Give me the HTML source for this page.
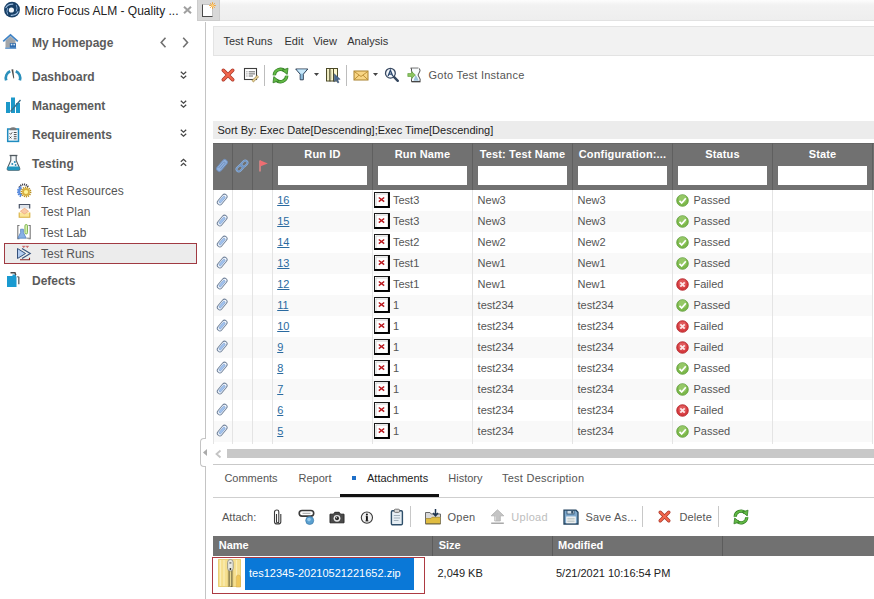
<!DOCTYPE html>
<html><head><meta charset="utf-8">
<style>
*{box-sizing:border-box;margin:0;padding:0}
html,body{width:874px;height:599px;overflow:hidden;background:#fff;font-family:"Liberation Sans",sans-serif;position:relative}
.a{position:absolute}
.t{position:absolute;white-space:nowrap;line-height:1}
svg{overflow:visible}
</style></head><body>
<div class="a" style="left:220px;top:0px;width:654px;height:21px;background:linear-gradient(#fdfdfd 0px,#f2f2f2 5px,#eeeeee 20px);border-bottom:1px solid #e2e2e2"></div>
<svg class="a" style="left:3px;top:1px" width="18" height="18" viewBox="0 0 18 18">
  <circle cx="9" cy="8.7" r="7.9" fill="#183f66"/>
  <circle cx="8.4" cy="9" r="2.6" fill="#f2f6fa"/>
  <g fill="none" stroke-linecap="round">
    <path d="M3 6.6 Q4.8 3 9.8 3.1" stroke="#9dbddf" stroke-width="1.2"/>
    <path d="M15 10.8 Q13.2 14.4 8.2 14.3" stroke="#9dbddf" stroke-width="1.2"/>
    <path d="M4.6 13.2 Q3 10.4 4.6 7.4" stroke="#7ea6d0" stroke-width="1"/>
    <path d="M13.4 4.2 Q15 7 13.4 10" stroke="#7ea6d0" stroke-width="1"/>
  </g>
</svg>
<div class="t" style="left:24.5px;top:5px;font-size:12px;color:#222;font-weight:400;">Micro Focus ALM - Quality ...</div>
<svg class="a" style="left:183px;top:6px" width="9" height="8" viewBox="0 0 9 8"><path d="M1 0.7L8 7.3M8 0.7L1 7.3" stroke="#a0a0a0" stroke-width="2"/></svg>
<div class="a" style="left:197px;top:0px;width:23px;height:21px;background:#d8d8d8;border:1px solid #cdcdcd;border-top:none"></div>
<div class="a" style="left:202px;top:4px;width:11px;height:13px;background:#fff;border:1px solid #c4c4c4;border-left:1px solid #4a4a4a;border-bottom:1px solid #4a4a4a"></div>
<svg class="a" style="left:209px;top:2px" width="7" height="7" viewBox="0 0 7 7"><g stroke="#f3a43a" stroke-width="1"><path d="M3.5 0.2V6.8M0.2 3.5H6.8M1.2 1.2L5.8 5.8M5.8 1.2L1.2 5.8"/></g><circle cx="3.5" cy="3.5" r="1.5" fill="#fbd080"/></svg>
<div class="a" style="left:205px;top:22px;width:1px;height:416px;background:#c4c4c4"></div>
<div class="a" style="left:205px;top:466px;width:1px;height:133px;background:#c4c4c4"></div>
<div class="t" style="left:32px;top:37px;font-size:12px;color:#5b5b5b;font-weight:700;">My Homepage</div>
<div class="t" style="left:32px;top:71px;font-size:12px;color:#5b5b5b;font-weight:700;">Dashboard</div>
<div class="t" style="left:32px;top:100px;font-size:12px;color:#5b5b5b;font-weight:700;">Management</div>
<div class="t" style="left:32px;top:129px;font-size:12px;color:#5b5b5b;font-weight:700;">Requirements</div>
<div class="t" style="left:32px;top:158px;font-size:12px;color:#5b5b5b;font-weight:700;">Testing</div>
<div class="t" style="left:32px;top:275px;font-size:12px;color:#5b5b5b;font-weight:700;">Defects</div>
<svg class="a" style="left:160px;top:37px" width="7" height="11" viewBox="0 0 7 11"><path d="M5.5 0.8L1.2 5.5L5.5 10.2" stroke="#707070" stroke-width="1.6" fill="none"/></svg>
<svg class="a" style="left:181.5px;top:37px" width="7" height="11" viewBox="0 0 7 11"><path d="M1.2 0.8L5.5 5.5L1.2 10.2" stroke="#707070" stroke-width="1.6" fill="none"/></svg>
<svg class="a" style="left:180px;top:71px" width="7" height="9" viewBox="0 0 7 9"><path d="M0.8 0.8L3.5 3.3L6.2 0.8M0.8 4.8L3.5 7.3L6.2 4.8" stroke="#444" stroke-width="1.2" fill="none"/></svg>
<svg class="a" style="left:180px;top:100px" width="7" height="9" viewBox="0 0 7 9"><path d="M0.8 0.8L3.5 3.3L6.2 0.8M0.8 4.8L3.5 7.3L6.2 4.8" stroke="#444" stroke-width="1.2" fill="none"/></svg>
<svg class="a" style="left:180px;top:129px" width="7" height="9" viewBox="0 0 7 9"><path d="M0.8 0.8L3.5 3.3L6.2 0.8M0.8 4.8L3.5 7.3L6.2 4.8" stroke="#444" stroke-width="1.2" fill="none"/></svg>
<svg class="a" style="left:180px;top:158px" width="7" height="9" viewBox="0 0 7 9"><path d="M0.8 3.8L3.5 1.3L6.2 3.8M0.8 7.8L3.5 5.3L6.2 7.8" stroke="#444" stroke-width="1.2" fill="none"/></svg>
<svg class="a" style="left:2px;top:33px" width="17" height="16" viewBox="0 0 17 16">
  <path d="M3.5 7.8V14.8H13.5V7.8L8.5 3.2z" fill="#a2a6aa"/>
  <path d="M1.2 8.3L8.5 1.8L15.8 8.3" stroke="#3f82c4" stroke-width="1.7" fill="none"/>
  <rect x="7.8" y="10.2" width="6.2" height="4.6" fill="#2f6db0"/>
  <circle cx="9.6" cy="11.6" r="0.9" fill="#d8e6f2"/><circle cx="12.2" cy="11.6" r="0.9" fill="#d8e6f2"/>
  <rect x="3.2" y="14.6" width="11" height="1.2" fill="#4a88c8"/>
</svg>
<svg class="a" style="left:4px;top:68px" width="18" height="13" viewBox="0 0 18 13">
  <path d="M2.2 12.3 A7.6 7.6 0 0 1 6.2 3.2" stroke="#2a8fbb" stroke-width="2.8" fill="none"/>
  <path d="M11.8 3.2 A7.6 7.6 0 0 1 15.8 12.3" stroke="#2a8fbb" stroke-width="2.8" fill="none"/>
  <path d="M7.4 1.5 L9.2 1.3 L10.2 10.2 L9.4 10.4z" fill="#4a4a4a"/>
</svg>
<svg class="a" style="left:5px;top:97px" width="17" height="16" viewBox="0 0 17 16">
  <rect x="1" y="5" width="4" height="11" fill="#1c98c9"/>
  <rect x="6" y="0.5" width="4" height="15.5" fill="#1c98c9"/>
  <rect x="11" y="6" width="4" height="10" fill="#1c98c9"/>
  <path d="M5.5 14.5L15.5 3" stroke="#3b6f8a" stroke-width="1.4"/>
</svg>
<svg class="a" style="left:6px;top:126px" width="14" height="17" viewBox="0 0 14 17">
  <rect x="1.7" y="3" width="10.8" height="12.4" fill="#f2f7fa" stroke="#1f8cc0" stroke-width="1.5"/>
  <path d="M3.5 4.2Q3.5 1.2 7.1 1.2Q10.7 1.2 10.7 4.2z" fill="#7a7a7a"/>
  <path d="M3.6 7.3l1 1 1.6-1.9M3.6 10.6l1.8 1.8M5.4 10.6l-1.8 1.8" stroke="#3a3a3a" stroke-width="0.9" fill="none"/>
  <path d="M7.8 6.5h2.8M7.8 8.6h2.8M7.8 10.7h2.8M7.8 12.8h2.8" stroke="#3a3a3a" stroke-width="0.9"/>
</svg>
<svg class="a" style="left:6px;top:154px" width="15" height="18" viewBox="0 0 15 18">
  <path d="M4.8 1.8V6.5L1.3 14.3Q0.9 16.3 2.6 16.3H12.4Q14.1 16.3 13.7 14.3L10.2 6.5V1.8" stroke="#505a60" stroke-width="1.1" fill="#f4f8fa"/>
  <path d="M3.6 1.5H11.4" stroke="#505a60" stroke-width="1.3"/>
  <path d="M1.8 12.6H13.2L13.7 14.3Q14.1 16.3 12.4 16.3H2.6Q0.9 16.3 1.3 14.3z" fill="#2296bf"/>
  <circle cx="6.3" cy="10" r="1" fill="#2a8ab5"/><circle cx="8.8" cy="8" r="1" fill="#2a8ab5"/><circle cx="9.6" cy="11" r="0.9" fill="#2a8ab5"/>
</svg>
<svg class="a" style="left:16px;top:182px" width="16" height="16" viewBox="0 0 16 16">
  <path d="M3.5 5.5 A4.6 4.6 0 0 1 12 5" stroke="#3c3c48" stroke-width="2" fill="none" stroke-dasharray="1.1 0.8"/>
  <path d="M5.3 13.8 A4.8 4.8 0 0 1 5.3 5.2" stroke="#4a80d8" stroke-width="3.2" fill="none" stroke-dasharray="1.3 0.7"/>
  <path d="M5.3 13.2 A4.2 4.2 0 0 1 5.3 5.8" stroke="#5b8ee0" stroke-width="2.2" fill="none"/>
  <circle cx="10" cy="10" r="4.6" fill="none" stroke="#b89020" stroke-width="1.6" stroke-dasharray="1.2 0.8"/>
  <circle cx="10" cy="10" r="3.9" fill="#d8b040"/>
  <circle cx="10" cy="10" r="2.1" fill="#fff59a"/>
</svg>
<svg class="a" style="left:18px;top:203px" width="13" height="16" viewBox="0 0 13 16">
  <path d="M1.3 5.5V1.5H11.7V5.5" stroke="#4a5568" stroke-width="1.2" fill="#dfe4ea"/>
  <path d="M1.2 9.5V14.2H11.8V9.5" stroke="#d8b040" stroke-width="1.1" fill="#fbe69a"/>
  <path d="M1.8 8.2L6.5 4.8L11.2 8.2L6.5 11.4z" fill="#f0b48a"/>
  <path d="M3 8.2L6.5 5.8L10 8.2L6.5 10.4z" fill="#f8caa8"/>
</svg>
<svg class="a" style="left:17px;top:224px" width="14" height="16" viewBox="0 0 14 16">
  <path d="M2.5 1.5H0.8V14.6H2.5M11.5 1.5H13.2V14.6H11.5" stroke="#7a7a7a" stroke-width="1.1" fill="none"/>
  <path d="M3.6 5.2H6.4V8.5L9.2 14.2H0.8L3.6 8.5z" fill="#88b2e6" stroke="#4a78b8" stroke-width="0.7"/>
  <rect x="7.9" y="0.5" width="2.6" height="9.5" rx="1.3" fill="#d8f0b0" stroke="#6aa838" stroke-width="0.8"/>
  <path d="M9.5 14.2H12.8" stroke="#9a9a9a" stroke-width="1.2"/>
</svg>
<div class="a" style="left:4px;top:243px;width:193px;height:21px;background:#ececec;border:1px solid #a03a42"></div>
<div class="t" style="left:41px;top:185px;font-size:12px;color:#555;font-weight:400;">Test Resources</div>
<div class="t" style="left:41px;top:206px;font-size:12px;color:#555;font-weight:400;">Test Plan</div>
<div class="t" style="left:41px;top:227px;font-size:12px;color:#555;font-weight:400;">Test Lab</div>
<div class="t" style="left:41px;top:248px;font-size:12px;color:#555;font-weight:400;">Test Runs</div>
<svg class="a" style="left:16px;top:245px" width="16" height="16" viewBox="0 0 16 16">
  <path d="M1.5 3.5L9.5 8.5L1.5 13.5z" fill="#b4cdf0" stroke="#34507a" stroke-width="1"/>
  <path d="M6 3.5L14.3 8.5L6 13.5" stroke="#34507a" stroke-width="1.1" fill="none"/>
  <path d="M6.2 1.3H9.3M7.75 1.3V3M9.8 1.3H12.8M11.3 1.3V3" stroke="#c05050" stroke-width="0.8"/>
  <path d="M4 14.8H13.5V12.8" stroke="#8a2a2a" stroke-width="1.1" fill="none"/>
</svg>
<svg class="a" style="left:6px;top:271px" width="16" height="17" viewBox="0 0 16 17">
  <path d="M1 5H6.5V3.5H9.5L10.5 6V16H1z" fill="#1a9ad0"/>
  <path d="M4.5 1.8H9L9.8 4.2" stroke="#4a4a4a" stroke-width="1.4" fill="none"/>
  <path d="M12.8 5.8V13.2" stroke="#6a6a6a" stroke-width="1.4"/>
  <path d="M11 5.8H12.8" stroke="#6a6a6a" stroke-width="1"/>
</svg>
<div class="a" style="left:213px;top:26px;width:661px;height:30px;background:#f2f2f2;border:1px solid #e3e3e3;border-right:none"></div>
<div class="t" style="left:223.5px;top:36px;font-size:11px;color:#333;font-weight:400;">Test Runs</div>
<div class="t" style="left:284.5px;top:36px;font-size:11px;color:#333;font-weight:400;">Edit</div>
<div class="t" style="left:313.2px;top:36px;font-size:11px;color:#333;font-weight:400;">View</div>
<div class="t" style="left:347.2px;top:36px;font-size:11px;color:#333;font-weight:400;">Analysis</div>
<svg class="a" style="left:221px;top:68px" width="14" height="14" viewBox="0 0 14 14"><path d="M2.3 2.3L11.7 11.7M11.7 2.3L2.3 11.7" stroke="#a8382a" stroke-width="3.6" stroke-linecap="round"/><path d="M2.3 2.3L11.7 11.7M11.7 2.3L2.3 11.7" stroke="#f2664c" stroke-width="2.1" stroke-linecap="round"/></svg>
<svg class="a" style="left:243px;top:67px" width="17" height="16" viewBox="0 0 17 16">
  <rect x="1.5" y="1.5" width="12" height="11" fill="#fff" stroke="#3f3f3f" stroke-width="1.1"/>
  <path d="M3.3 4.8h1.2M3.3 6.9h1.2M3.3 9h1.2" stroke="#888" stroke-width="1"/>
  <path d="M5.7 4.8H12M5.7 6.9H12M5.7 9H10" stroke="#555" stroke-width="0.9"/>
  <path d="M9.5 14.5L15 9" stroke="#a08850" stroke-width="2.6"/>
  <path d="M9.5 14.5L15 9" stroke="#e8d49a" stroke-width="1.4"/>
</svg>
<div class="a" style="left:264px;top:65px;width:1px;height:21px;background:#bdbdbd"></div>
<svg class="a" style="left:272px;top:67px" width="17" height="17" viewBox="0 0 17 17">
  <g fill="none" stroke-linecap="butt">
  <path d="M2.3 8.2A6.2 6.2 0 0 1 12.8 4" stroke="#2f7a22" stroke-width="3.4"/>
  <path d="M14.7 8.8A6.2 6.2 0 0 1 4.2 13" stroke="#2f7a22" stroke-width="3.4"/>
  <path d="M2.3 8.2A6.2 6.2 0 0 1 12.8 4" stroke="#62b845" stroke-width="2"/>
  <path d="M14.7 8.8A6.2 6.2 0 0 1 4.2 13" stroke="#62b845" stroke-width="2"/>
  </g>
  <path d="M10 3.2L16 1.2L15.2 7.4z" fill="#62b845" stroke="#2f7a22" stroke-width="0.8"/>
  <path d="M7 13.8L1 15.8L1.8 9.6z" fill="#62b845" stroke="#2f7a22" stroke-width="0.8"/>
</svg>
<svg class="a" style="left:295px;top:68px" width="14" height="13" viewBox="0 0 14 13"><path d="M0.7 1H12.8L8.3 6.2V11.8H5.2V6.2z" fill="#9fd0ee" stroke="#2f3f55" stroke-width="1"/><path d="M1.8 1.6H11.7L7.8 5.4H5.7z" fill="#c8e8fa"/><path d="M5.8 6.5V11" stroke="#5d88aa" stroke-width="1"/></svg>
<svg class="a" style="left:314px;top:73px" width="5" height="3" viewBox="0 0 5 3"><path d="M0 0H5L2.5 3z" fill="#444"/></svg>
<svg class="a" style="left:325px;top:67px" width="16" height="17" viewBox="0 0 16 17">
  <rect x="1.5" y="1.5" width="3.5" height="12.5" fill="#fdf9cf" stroke="#4c4a28" stroke-width="1"/>
  <rect x="5" y="1.5" width="3.5" height="12.5" fill="#fdf9cf" stroke="#4c4a28" stroke-width="1"/>
  <rect x="8.5" y="1.5" width="4" height="12.5" fill="#fdf9cf" stroke="#4c4a28" stroke-width="1"/>
  <path d="M2.9 3.2V12.5M6.5 3.2V12.5" stroke="#c8c8a0" stroke-width="0.6"/>
  <path d="M9.3 6.8L9.3 14.8L11.3 13L12.8 16L14 15.4L12.6 12.5L15.2 12.3z" fill="#4a6a90" stroke="#3a5070" stroke-width="0.5"/>
</svg>
<div class="a" style="left:346px;top:65px;width:1px;height:21px;background:#bdbdbd"></div>
<svg class="a" style="left:353px;top:70px" width="16" height="11" viewBox="0 0 16 11"><rect x="1" y="1" width="14" height="9" fill="#f8d584" stroke="#a8802c" stroke-width="1"/><path d="M1.3 1.5L8 6.5L14.7 1.5M1.3 9.5L6 5.2M14.7 9.5L10 5.2" stroke="#b88a30" stroke-width="0.9" fill="none"/></svg>
<svg class="a" style="left:373px;top:73px" width="5" height="3" viewBox="0 0 5 3"><path d="M0 0H5L2.5 3z" fill="#444"/></svg>
<svg class="a" style="left:384px;top:67px" width="16" height="16" viewBox="0 0 16 16">
  <circle cx="6.4" cy="6.2" r="4.9" fill="#f4f8fc" stroke="#3a4a62" stroke-width="1.3"/>
  <path d="M9.9 9.8L13.8 13.8" stroke="#34465e" stroke-width="2.4" stroke-linecap="round"/>
  <path d="M4.1 8.9L6.4 3.2L8.7 8.9M4.9 7.1H7.9" stroke="#2e4a70" stroke-width="1.3" fill="none"/>
</svg>
<svg class="a" style="left:407px;top:67px" width="16" height="16" viewBox="0 0 16 16">
  <path d="M3.5 1.2H11.5M4.5 14.8H13.5" stroke="#2a2a2a" stroke-width="1"/>
  <path d="M4.5 1.5Q4 4 5.5 6Q7.5 8 5.5 10Q4 12 4.5 14.5H13Q13.8 12 12 10Q10 8 12 6Q13.8 4 12.5 1.5" fill="#f8fbfd" stroke="#3a3a3a" stroke-width="0.9"/>
  <path d="M8.5 8Q10.5 10 11.8 13.8H6.5Q7.5 11 8.5 8z" fill="#9ec4dc"/>
  <path d="M0.8 6.5H4.5V4.6L8.4 8L4.5 11.4V9.5H0.8z" fill="#8cc460" stroke="#5a9a38" stroke-width="0.6"/>
</svg>
<div class="t" style="left:428.5px;top:70px;font-size:11px;color:#555;font-weight:400;letter-spacing:0.25px">Goto Test Instance</div>
<div class="a" style="left:213px;top:121px;width:661px;height:18px;background:#ececec"></div>
<div class="t" style="left:217.5px;top:125px;font-size:11px;color:#222;font-weight:400;">Sort By: Exec Date[Descending];Exec Time[Descending]</div>
<div class="a" style="left:213px;top:143px;width:661px;height:47px;background:#717171;border-top:1px solid #666"></div>
<div class="a" style="left:232px;top:143px;width:1px;height:47px;background:#5f5f5f"></div>
<div class="a" style="left:252px;top:143px;width:1px;height:47px;background:#5f5f5f"></div>
<div class="a" style="left:272px;top:143px;width:1px;height:47px;background:#5f5f5f"></div>
<div class="a" style="left:372px;top:143px;width:1px;height:47px;background:#5f5f5f"></div>
<div class="a" style="left:472px;top:143px;width:1px;height:47px;background:#5f5f5f"></div>
<div class="a" style="left:572px;top:143px;width:1px;height:47px;background:#5f5f5f"></div>
<div class="a" style="left:672px;top:143px;width:1px;height:47px;background:#5f5f5f"></div>
<div class="a" style="left:772px;top:143px;width:1px;height:47px;background:#5f5f5f"></div>
<div class="a" style="left:872px;top:143px;width:1px;height:47px;background:#5f5f5f"></div>
<div class="t" style="left:272px;width:100px;top:149px;text-align:center;font-size:11px;font-weight:700;color:#fff;letter-spacing:0.15px;padding-left:1px">Run ID</div>
<div class="a" style="left:278px;top:166px;width:89px;height:19px;background:#fff"></div>
<div class="t" style="left:372px;width:100px;top:149px;text-align:center;font-size:11px;font-weight:700;color:#fff;letter-spacing:0.15px;padding-left:1px">Run Name</div>
<div class="a" style="left:378px;top:166px;width:89px;height:19px;background:#fff"></div>
<div class="t" style="left:472px;width:100px;top:149px;text-align:center;font-size:11px;font-weight:700;color:#fff;letter-spacing:0.15px;padding-left:1px">Test: Test Name</div>
<div class="a" style="left:478px;top:166px;width:89px;height:19px;background:#fff"></div>
<div class="t" style="left:572px;width:100px;top:149px;text-align:center;font-size:11px;font-weight:700;color:#fff;letter-spacing:0.15px;padding-left:1px">Configuration:...</div>
<div class="a" style="left:578px;top:166px;width:89px;height:19px;background:#fff"></div>
<div class="t" style="left:672px;width:100px;top:149px;text-align:center;font-size:11px;font-weight:700;color:#fff;letter-spacing:0.15px;padding-left:1px">Status</div>
<div class="a" style="left:678px;top:166px;width:89px;height:19px;background:#fff"></div>
<div class="t" style="left:772px;width:100px;top:149px;text-align:center;font-size:11px;font-weight:700;color:#fff;letter-spacing:0.15px;padding-left:1px">State</div>
<div class="a" style="left:778px;top:166px;width:89px;height:19px;background:#fff"></div>
<svg class="a" style="left:216px;top:159px" width="12" height="13" viewBox="0 0 12 13"><g transform="rotate(40 6 6.5)"><rect x="3.3" y="-0.5" width="5.4" height="14" rx="2.7" fill="#8fb0dc" stroke="#6f8cb8" stroke-width="0.9"/><path d="M5 10.5V3.2Q5 2.2 6 2.2Q7 2.2 7 3.2V10" stroke="#6f8cb8" stroke-width="0.8" fill="none"/></g></svg>
<svg class="a" style="left:235px;top:159px" width="14" height="14" viewBox="0 0 14 14"><g transform="rotate(-45 7 7)" fill="none" stroke="#8fb4e0" stroke-width="1.9"><rect x="0.2" y="4.8" width="7.4" height="4.4" rx="2.2"/><rect x="6.4" y="4.8" width="7.4" height="4.4" rx="2.2"/></g><g transform="rotate(-45 7 7)" fill="none" stroke="#5a7fb0" stroke-width="0.6"><rect x="0.2" y="4.8" width="7.4" height="4.4" rx="2.2"/><rect x="6.4" y="4.8" width="7.4" height="4.4" rx="2.2"/></g></svg>
<svg class="a" style="left:258px;top:159px" width="11" height="13" viewBox="0 0 11 13"><path d="M2 1.5V12.5" stroke="#e08a8a" stroke-width="1.5"/><path d="M2 1.2L9.8 4.4L2 7.6z" fill="#ee6e72"/></svg>
<div class="a" style="left:213px;top:190.00px;width:660px;height:21.00px;background:#ffffff"></div>
<div class="a" style="left:213px;top:211.00px;width:660px;height:21.00px;background:#f9f9f9"></div>
<div class="a" style="left:213px;top:232.00px;width:660px;height:21.00px;background:#ffffff"></div>
<div class="a" style="left:213px;top:253.00px;width:660px;height:21.00px;background:#f9f9f9"></div>
<div class="a" style="left:213px;top:274.00px;width:660px;height:21.00px;background:#ffffff"></div>
<div class="a" style="left:213px;top:295.00px;width:660px;height:21.00px;background:#f9f9f9"></div>
<div class="a" style="left:213px;top:316.00px;width:660px;height:21.00px;background:#ffffff"></div>
<div class="a" style="left:213px;top:337.00px;width:660px;height:21.00px;background:#f9f9f9"></div>
<div class="a" style="left:213px;top:358.00px;width:660px;height:21.00px;background:#ffffff"></div>
<div class="a" style="left:213px;top:379.00px;width:660px;height:21.00px;background:#f9f9f9"></div>
<div class="a" style="left:213px;top:400.00px;width:660px;height:21.00px;background:#ffffff"></div>
<div class="a" style="left:213px;top:421.00px;width:660px;height:21.00px;background:#f9f9f9"></div>
<div class="a" style="left:213px;top:190px;width:1px;height:254.00px;background:#e4e4e4"></div>
<div class="a" style="left:232px;top:190px;width:1px;height:254.00px;background:#e4e4e4"></div>
<div class="a" style="left:252px;top:190px;width:1px;height:254.00px;background:#e4e4e4"></div>
<div class="a" style="left:272px;top:190px;width:1px;height:254.00px;background:#e4e4e4"></div>
<div class="a" style="left:372px;top:190px;width:1px;height:254.00px;background:#e4e4e4"></div>
<div class="a" style="left:472px;top:190px;width:1px;height:254.00px;background:#e4e4e4"></div>
<div class="a" style="left:572px;top:190px;width:1px;height:254.00px;background:#e4e4e4"></div>
<div class="a" style="left:672px;top:190px;width:1px;height:254.00px;background:#e4e4e4"></div>
<div class="a" style="left:772px;top:190px;width:1px;height:254.00px;background:#e4e4e4"></div>
<div class="a" style="left:872px;top:190px;width:1px;height:254.00px;background:#e4e4e4"></div>
<svg class="a" style="left:216px;top:193px" width="12" height="13" viewBox="0 0 12 13"><g transform="rotate(40 6.2 6.5)"><rect x="3.7" y="0.3" width="5" height="12.4" rx="2.5" fill="#eef5fd" stroke="#71829a" stroke-width="0.95"/><rect x="5.1" y="2.6" width="2.2" height="8" rx="1.1" fill="#a2c4f0" stroke="#7d9ccc" stroke-width="0.6"/></g></svg>
<div class="t" style="left:277.2px;top:195px;font-size:11px;color:#2a6aa0;font-weight:400;text-decoration:underline">16</div>
<svg class="a" style="left:374px;top:192px" width="16" height="16" viewBox="0 0 16 16"><rect x="0.5" y="0.5" width="15" height="15" fill="#fff" stroke="#1a1a1a" stroke-width="1"/><path d="M14.8 0.5V14.8H0.5" stroke="#000" stroke-width="1.8" fill="none"/><path d="M2 14V2H14" stroke="#c8c8c8" stroke-width="0.8" fill="none"/><path d="M4.8 5.5L10.2 9.6M10.2 5.5L4.8 9.6" stroke="#b8161c" stroke-width="1.5"/></svg>
<div class="t" style="left:393px;top:195px;font-size:11px;color:#555;font-weight:400;">Test3</div>
<div class="t" style="left:477.6px;top:195px;font-size:11px;color:#555;font-weight:400;">New3</div>
<div class="t" style="left:577.5px;top:195px;font-size:11px;color:#555;font-weight:400;">New3</div>
<svg class="a" style="left:676px;top:194px" width="13" height="13" viewBox="0 0 13 13"><circle cx="6.5" cy="6.5" r="5.8" fill="#7cb84a" stroke="#5a9a35" stroke-width="0.8"/><circle cx="6.5" cy="5" r="4" fill="#a6d27a" opacity="0.6"/><path d="M3.5 6.8L5.7 9L9.8 4.2" stroke="#fff" stroke-width="1.7" fill="none"/></svg>
<div class="t" style="left:693.5px;top:195px;font-size:11px;color:#555;font-weight:400;">Passed</div>
<svg class="a" style="left:216px;top:214px" width="12" height="13" viewBox="0 0 12 13"><g transform="rotate(40 6.2 6.5)"><rect x="3.7" y="0.3" width="5" height="12.4" rx="2.5" fill="#eef5fd" stroke="#71829a" stroke-width="0.95"/><rect x="5.1" y="2.6" width="2.2" height="8" rx="1.1" fill="#a2c4f0" stroke="#7d9ccc" stroke-width="0.6"/></g></svg>
<div class="t" style="left:277.2px;top:216px;font-size:11px;color:#2a6aa0;font-weight:400;text-decoration:underline">15</div>
<svg class="a" style="left:374px;top:213px" width="16" height="16" viewBox="0 0 16 16"><rect x="0.5" y="0.5" width="15" height="15" fill="#fff" stroke="#1a1a1a" stroke-width="1"/><path d="M14.8 0.5V14.8H0.5" stroke="#000" stroke-width="1.8" fill="none"/><path d="M2 14V2H14" stroke="#c8c8c8" stroke-width="0.8" fill="none"/><path d="M4.8 5.5L10.2 9.6M10.2 5.5L4.8 9.6" stroke="#b8161c" stroke-width="1.5"/></svg>
<div class="t" style="left:393px;top:216px;font-size:11px;color:#555;font-weight:400;">Test3</div>
<div class="t" style="left:477.6px;top:216px;font-size:11px;color:#555;font-weight:400;">New3</div>
<div class="t" style="left:577.5px;top:216px;font-size:11px;color:#555;font-weight:400;">New3</div>
<svg class="a" style="left:676px;top:215px" width="13" height="13" viewBox="0 0 13 13"><circle cx="6.5" cy="6.5" r="5.8" fill="#7cb84a" stroke="#5a9a35" stroke-width="0.8"/><circle cx="6.5" cy="5" r="4" fill="#a6d27a" opacity="0.6"/><path d="M3.5 6.8L5.7 9L9.8 4.2" stroke="#fff" stroke-width="1.7" fill="none"/></svg>
<div class="t" style="left:693.5px;top:216px;font-size:11px;color:#555;font-weight:400;">Passed</div>
<svg class="a" style="left:216px;top:235px" width="12" height="13" viewBox="0 0 12 13"><g transform="rotate(40 6.2 6.5)"><rect x="3.7" y="0.3" width="5" height="12.4" rx="2.5" fill="#eef5fd" stroke="#71829a" stroke-width="0.95"/><rect x="5.1" y="2.6" width="2.2" height="8" rx="1.1" fill="#a2c4f0" stroke="#7d9ccc" stroke-width="0.6"/></g></svg>
<div class="t" style="left:277.2px;top:237px;font-size:11px;color:#2a6aa0;font-weight:400;text-decoration:underline">14</div>
<svg class="a" style="left:374px;top:234px" width="16" height="16" viewBox="0 0 16 16"><rect x="0.5" y="0.5" width="15" height="15" fill="#fff" stroke="#1a1a1a" stroke-width="1"/><path d="M14.8 0.5V14.8H0.5" stroke="#000" stroke-width="1.8" fill="none"/><path d="M2 14V2H14" stroke="#c8c8c8" stroke-width="0.8" fill="none"/><path d="M4.8 5.5L10.2 9.6M10.2 5.5L4.8 9.6" stroke="#b8161c" stroke-width="1.5"/></svg>
<div class="t" style="left:393px;top:237px;font-size:11px;color:#555;font-weight:400;">Test2</div>
<div class="t" style="left:477.6px;top:237px;font-size:11px;color:#555;font-weight:400;">New2</div>
<div class="t" style="left:577.5px;top:237px;font-size:11px;color:#555;font-weight:400;">New2</div>
<svg class="a" style="left:676px;top:236px" width="13" height="13" viewBox="0 0 13 13"><circle cx="6.5" cy="6.5" r="5.8" fill="#7cb84a" stroke="#5a9a35" stroke-width="0.8"/><circle cx="6.5" cy="5" r="4" fill="#a6d27a" opacity="0.6"/><path d="M3.5 6.8L5.7 9L9.8 4.2" stroke="#fff" stroke-width="1.7" fill="none"/></svg>
<div class="t" style="left:693.5px;top:237px;font-size:11px;color:#555;font-weight:400;">Passed</div>
<svg class="a" style="left:216px;top:256px" width="12" height="13" viewBox="0 0 12 13"><g transform="rotate(40 6.2 6.5)"><rect x="3.7" y="0.3" width="5" height="12.4" rx="2.5" fill="#eef5fd" stroke="#71829a" stroke-width="0.95"/><rect x="5.1" y="2.6" width="2.2" height="8" rx="1.1" fill="#a2c4f0" stroke="#7d9ccc" stroke-width="0.6"/></g></svg>
<div class="t" style="left:277.2px;top:258px;font-size:11px;color:#2a6aa0;font-weight:400;text-decoration:underline">13</div>
<svg class="a" style="left:374px;top:255px" width="16" height="16" viewBox="0 0 16 16"><rect x="0.5" y="0.5" width="15" height="15" fill="#fff" stroke="#1a1a1a" stroke-width="1"/><path d="M14.8 0.5V14.8H0.5" stroke="#000" stroke-width="1.8" fill="none"/><path d="M2 14V2H14" stroke="#c8c8c8" stroke-width="0.8" fill="none"/><path d="M4.8 5.5L10.2 9.6M10.2 5.5L4.8 9.6" stroke="#b8161c" stroke-width="1.5"/></svg>
<div class="t" style="left:393px;top:258px;font-size:11px;color:#555;font-weight:400;">Test1</div>
<div class="t" style="left:477.6px;top:258px;font-size:11px;color:#555;font-weight:400;">New1</div>
<div class="t" style="left:577.5px;top:258px;font-size:11px;color:#555;font-weight:400;">New1</div>
<svg class="a" style="left:676px;top:257px" width="13" height="13" viewBox="0 0 13 13"><circle cx="6.5" cy="6.5" r="5.8" fill="#7cb84a" stroke="#5a9a35" stroke-width="0.8"/><circle cx="6.5" cy="5" r="4" fill="#a6d27a" opacity="0.6"/><path d="M3.5 6.8L5.7 9L9.8 4.2" stroke="#fff" stroke-width="1.7" fill="none"/></svg>
<div class="t" style="left:693.5px;top:258px;font-size:11px;color:#555;font-weight:400;">Passed</div>
<svg class="a" style="left:216px;top:277px" width="12" height="13" viewBox="0 0 12 13"><g transform="rotate(40 6.2 6.5)"><rect x="3.7" y="0.3" width="5" height="12.4" rx="2.5" fill="#eef5fd" stroke="#71829a" stroke-width="0.95"/><rect x="5.1" y="2.6" width="2.2" height="8" rx="1.1" fill="#a2c4f0" stroke="#7d9ccc" stroke-width="0.6"/></g></svg>
<div class="t" style="left:277.2px;top:279px;font-size:11px;color:#2a6aa0;font-weight:400;text-decoration:underline">12</div>
<svg class="a" style="left:374px;top:276px" width="16" height="16" viewBox="0 0 16 16"><rect x="0.5" y="0.5" width="15" height="15" fill="#fff" stroke="#1a1a1a" stroke-width="1"/><path d="M14.8 0.5V14.8H0.5" stroke="#000" stroke-width="1.8" fill="none"/><path d="M2 14V2H14" stroke="#c8c8c8" stroke-width="0.8" fill="none"/><path d="M4.8 5.5L10.2 9.6M10.2 5.5L4.8 9.6" stroke="#b8161c" stroke-width="1.5"/></svg>
<div class="t" style="left:393px;top:279px;font-size:11px;color:#555;font-weight:400;">Test1</div>
<div class="t" style="left:477.6px;top:279px;font-size:11px;color:#555;font-weight:400;">New1</div>
<div class="t" style="left:577.5px;top:279px;font-size:11px;color:#555;font-weight:400;">New1</div>
<svg class="a" style="left:676px;top:278px" width="13" height="13" viewBox="0 0 13 13"><circle cx="6.5" cy="6.5" r="5.8" fill="#d53a3e" stroke="#b02025" stroke-width="0.8"/><circle cx="6.5" cy="5.5" r="4" fill="#ee7a7a" opacity="0.5"/><path d="M4.3 4.3L8.7 8.7M8.7 4.3L4.3 8.7" stroke="#fde8e8" stroke-width="1.8"/></svg>
<div class="t" style="left:693.5px;top:279px;font-size:11px;color:#555;font-weight:400;">Failed</div>
<svg class="a" style="left:216px;top:298px" width="12" height="13" viewBox="0 0 12 13"><g transform="rotate(40 6.2 6.5)"><rect x="3.7" y="0.3" width="5" height="12.4" rx="2.5" fill="#eef5fd" stroke="#71829a" stroke-width="0.95"/><rect x="5.1" y="2.6" width="2.2" height="8" rx="1.1" fill="#a2c4f0" stroke="#7d9ccc" stroke-width="0.6"/></g></svg>
<div class="t" style="left:277.2px;top:300px;font-size:11px;color:#2a6aa0;font-weight:400;text-decoration:underline">11</div>
<svg class="a" style="left:374px;top:297px" width="16" height="16" viewBox="0 0 16 16"><rect x="0.5" y="0.5" width="15" height="15" fill="#fff" stroke="#1a1a1a" stroke-width="1"/><path d="M14.8 0.5V14.8H0.5" stroke="#000" stroke-width="1.8" fill="none"/><path d="M2 14V2H14" stroke="#c8c8c8" stroke-width="0.8" fill="none"/><path d="M4.8 5.5L10.2 9.6M10.2 5.5L4.8 9.6" stroke="#b8161c" stroke-width="1.5"/></svg>
<div class="t" style="left:393px;top:300px;font-size:11px;color:#555;font-weight:400;">1</div>
<div class="t" style="left:477.6px;top:300px;font-size:11px;color:#555;font-weight:400;">test234</div>
<div class="t" style="left:577.5px;top:300px;font-size:11px;color:#555;font-weight:400;">test234</div>
<svg class="a" style="left:676px;top:299px" width="13" height="13" viewBox="0 0 13 13"><circle cx="6.5" cy="6.5" r="5.8" fill="#7cb84a" stroke="#5a9a35" stroke-width="0.8"/><circle cx="6.5" cy="5" r="4" fill="#a6d27a" opacity="0.6"/><path d="M3.5 6.8L5.7 9L9.8 4.2" stroke="#fff" stroke-width="1.7" fill="none"/></svg>
<div class="t" style="left:693.5px;top:300px;font-size:11px;color:#555;font-weight:400;">Passed</div>
<svg class="a" style="left:216px;top:319px" width="12" height="13" viewBox="0 0 12 13"><g transform="rotate(40 6.2 6.5)"><rect x="3.7" y="0.3" width="5" height="12.4" rx="2.5" fill="#eef5fd" stroke="#71829a" stroke-width="0.95"/><rect x="5.1" y="2.6" width="2.2" height="8" rx="1.1" fill="#a2c4f0" stroke="#7d9ccc" stroke-width="0.6"/></g></svg>
<div class="t" style="left:277.2px;top:321px;font-size:11px;color:#2a6aa0;font-weight:400;text-decoration:underline">10</div>
<svg class="a" style="left:374px;top:318px" width="16" height="16" viewBox="0 0 16 16"><rect x="0.5" y="0.5" width="15" height="15" fill="#fff" stroke="#1a1a1a" stroke-width="1"/><path d="M14.8 0.5V14.8H0.5" stroke="#000" stroke-width="1.8" fill="none"/><path d="M2 14V2H14" stroke="#c8c8c8" stroke-width="0.8" fill="none"/><path d="M4.8 5.5L10.2 9.6M10.2 5.5L4.8 9.6" stroke="#b8161c" stroke-width="1.5"/></svg>
<div class="t" style="left:393px;top:321px;font-size:11px;color:#555;font-weight:400;">1</div>
<div class="t" style="left:477.6px;top:321px;font-size:11px;color:#555;font-weight:400;">test234</div>
<div class="t" style="left:577.5px;top:321px;font-size:11px;color:#555;font-weight:400;">test234</div>
<svg class="a" style="left:676px;top:320px" width="13" height="13" viewBox="0 0 13 13"><circle cx="6.5" cy="6.5" r="5.8" fill="#d53a3e" stroke="#b02025" stroke-width="0.8"/><circle cx="6.5" cy="5.5" r="4" fill="#ee7a7a" opacity="0.5"/><path d="M4.3 4.3L8.7 8.7M8.7 4.3L4.3 8.7" stroke="#fde8e8" stroke-width="1.8"/></svg>
<div class="t" style="left:693.5px;top:321px;font-size:11px;color:#555;font-weight:400;">Failed</div>
<svg class="a" style="left:216px;top:340px" width="12" height="13" viewBox="0 0 12 13"><g transform="rotate(40 6.2 6.5)"><rect x="3.7" y="0.3" width="5" height="12.4" rx="2.5" fill="#eef5fd" stroke="#71829a" stroke-width="0.95"/><rect x="5.1" y="2.6" width="2.2" height="8" rx="1.1" fill="#a2c4f0" stroke="#7d9ccc" stroke-width="0.6"/></g></svg>
<div class="t" style="left:277.2px;top:342px;font-size:11px;color:#2a6aa0;font-weight:400;text-decoration:underline">9</div>
<svg class="a" style="left:374px;top:339px" width="16" height="16" viewBox="0 0 16 16"><rect x="0.5" y="0.5" width="15" height="15" fill="#fff" stroke="#1a1a1a" stroke-width="1"/><path d="M14.8 0.5V14.8H0.5" stroke="#000" stroke-width="1.8" fill="none"/><path d="M2 14V2H14" stroke="#c8c8c8" stroke-width="0.8" fill="none"/><path d="M4.8 5.5L10.2 9.6M10.2 5.5L4.8 9.6" stroke="#b8161c" stroke-width="1.5"/></svg>
<div class="t" style="left:393px;top:342px;font-size:11px;color:#555;font-weight:400;">1</div>
<div class="t" style="left:477.6px;top:342px;font-size:11px;color:#555;font-weight:400;">test234</div>
<div class="t" style="left:577.5px;top:342px;font-size:11px;color:#555;font-weight:400;">test234</div>
<svg class="a" style="left:676px;top:341px" width="13" height="13" viewBox="0 0 13 13"><circle cx="6.5" cy="6.5" r="5.8" fill="#d53a3e" stroke="#b02025" stroke-width="0.8"/><circle cx="6.5" cy="5.5" r="4" fill="#ee7a7a" opacity="0.5"/><path d="M4.3 4.3L8.7 8.7M8.7 4.3L4.3 8.7" stroke="#fde8e8" stroke-width="1.8"/></svg>
<div class="t" style="left:693.5px;top:342px;font-size:11px;color:#555;font-weight:400;">Failed</div>
<svg class="a" style="left:216px;top:361px" width="12" height="13" viewBox="0 0 12 13"><g transform="rotate(40 6.2 6.5)"><rect x="3.7" y="0.3" width="5" height="12.4" rx="2.5" fill="#eef5fd" stroke="#71829a" stroke-width="0.95"/><rect x="5.1" y="2.6" width="2.2" height="8" rx="1.1" fill="#a2c4f0" stroke="#7d9ccc" stroke-width="0.6"/></g></svg>
<div class="t" style="left:277.2px;top:363px;font-size:11px;color:#2a6aa0;font-weight:400;text-decoration:underline">8</div>
<svg class="a" style="left:374px;top:360px" width="16" height="16" viewBox="0 0 16 16"><rect x="0.5" y="0.5" width="15" height="15" fill="#fff" stroke="#1a1a1a" stroke-width="1"/><path d="M14.8 0.5V14.8H0.5" stroke="#000" stroke-width="1.8" fill="none"/><path d="M2 14V2H14" stroke="#c8c8c8" stroke-width="0.8" fill="none"/><path d="M4.8 5.5L10.2 9.6M10.2 5.5L4.8 9.6" stroke="#b8161c" stroke-width="1.5"/></svg>
<div class="t" style="left:393px;top:363px;font-size:11px;color:#555;font-weight:400;">1</div>
<div class="t" style="left:477.6px;top:363px;font-size:11px;color:#555;font-weight:400;">test234</div>
<div class="t" style="left:577.5px;top:363px;font-size:11px;color:#555;font-weight:400;">test234</div>
<svg class="a" style="left:676px;top:362px" width="13" height="13" viewBox="0 0 13 13"><circle cx="6.5" cy="6.5" r="5.8" fill="#7cb84a" stroke="#5a9a35" stroke-width="0.8"/><circle cx="6.5" cy="5" r="4" fill="#a6d27a" opacity="0.6"/><path d="M3.5 6.8L5.7 9L9.8 4.2" stroke="#fff" stroke-width="1.7" fill="none"/></svg>
<div class="t" style="left:693.5px;top:363px;font-size:11px;color:#555;font-weight:400;">Passed</div>
<svg class="a" style="left:216px;top:382px" width="12" height="13" viewBox="0 0 12 13"><g transform="rotate(40 6.2 6.5)"><rect x="3.7" y="0.3" width="5" height="12.4" rx="2.5" fill="#eef5fd" stroke="#71829a" stroke-width="0.95"/><rect x="5.1" y="2.6" width="2.2" height="8" rx="1.1" fill="#a2c4f0" stroke="#7d9ccc" stroke-width="0.6"/></g></svg>
<div class="t" style="left:277.2px;top:384px;font-size:11px;color:#2a6aa0;font-weight:400;text-decoration:underline">7</div>
<svg class="a" style="left:374px;top:381px" width="16" height="16" viewBox="0 0 16 16"><rect x="0.5" y="0.5" width="15" height="15" fill="#fff" stroke="#1a1a1a" stroke-width="1"/><path d="M14.8 0.5V14.8H0.5" stroke="#000" stroke-width="1.8" fill="none"/><path d="M2 14V2H14" stroke="#c8c8c8" stroke-width="0.8" fill="none"/><path d="M4.8 5.5L10.2 9.6M10.2 5.5L4.8 9.6" stroke="#b8161c" stroke-width="1.5"/></svg>
<div class="t" style="left:393px;top:384px;font-size:11px;color:#555;font-weight:400;">1</div>
<div class="t" style="left:477.6px;top:384px;font-size:11px;color:#555;font-weight:400;">test234</div>
<div class="t" style="left:577.5px;top:384px;font-size:11px;color:#555;font-weight:400;">test234</div>
<svg class="a" style="left:676px;top:383px" width="13" height="13" viewBox="0 0 13 13"><circle cx="6.5" cy="6.5" r="5.8" fill="#7cb84a" stroke="#5a9a35" stroke-width="0.8"/><circle cx="6.5" cy="5" r="4" fill="#a6d27a" opacity="0.6"/><path d="M3.5 6.8L5.7 9L9.8 4.2" stroke="#fff" stroke-width="1.7" fill="none"/></svg>
<div class="t" style="left:693.5px;top:384px;font-size:11px;color:#555;font-weight:400;">Passed</div>
<svg class="a" style="left:216px;top:403px" width="12" height="13" viewBox="0 0 12 13"><g transform="rotate(40 6.2 6.5)"><rect x="3.7" y="0.3" width="5" height="12.4" rx="2.5" fill="#eef5fd" stroke="#71829a" stroke-width="0.95"/><rect x="5.1" y="2.6" width="2.2" height="8" rx="1.1" fill="#a2c4f0" stroke="#7d9ccc" stroke-width="0.6"/></g></svg>
<div class="t" style="left:277.2px;top:405px;font-size:11px;color:#2a6aa0;font-weight:400;text-decoration:underline">6</div>
<svg class="a" style="left:374px;top:402px" width="16" height="16" viewBox="0 0 16 16"><rect x="0.5" y="0.5" width="15" height="15" fill="#fff" stroke="#1a1a1a" stroke-width="1"/><path d="M14.8 0.5V14.8H0.5" stroke="#000" stroke-width="1.8" fill="none"/><path d="M2 14V2H14" stroke="#c8c8c8" stroke-width="0.8" fill="none"/><path d="M4.8 5.5L10.2 9.6M10.2 5.5L4.8 9.6" stroke="#b8161c" stroke-width="1.5"/></svg>
<div class="t" style="left:393px;top:405px;font-size:11px;color:#555;font-weight:400;">1</div>
<div class="t" style="left:477.6px;top:405px;font-size:11px;color:#555;font-weight:400;">test234</div>
<div class="t" style="left:577.5px;top:405px;font-size:11px;color:#555;font-weight:400;">test234</div>
<svg class="a" style="left:676px;top:404px" width="13" height="13" viewBox="0 0 13 13"><circle cx="6.5" cy="6.5" r="5.8" fill="#d53a3e" stroke="#b02025" stroke-width="0.8"/><circle cx="6.5" cy="5.5" r="4" fill="#ee7a7a" opacity="0.5"/><path d="M4.3 4.3L8.7 8.7M8.7 4.3L4.3 8.7" stroke="#fde8e8" stroke-width="1.8"/></svg>
<div class="t" style="left:693.5px;top:405px;font-size:11px;color:#555;font-weight:400;">Failed</div>
<svg class="a" style="left:216px;top:424px" width="12" height="13" viewBox="0 0 12 13"><g transform="rotate(40 6.2 6.5)"><rect x="3.7" y="0.3" width="5" height="12.4" rx="2.5" fill="#eef5fd" stroke="#71829a" stroke-width="0.95"/><rect x="5.1" y="2.6" width="2.2" height="8" rx="1.1" fill="#a2c4f0" stroke="#7d9ccc" stroke-width="0.6"/></g></svg>
<div class="t" style="left:277.2px;top:426px;font-size:11px;color:#2a6aa0;font-weight:400;text-decoration:underline">5</div>
<svg class="a" style="left:374px;top:423px" width="16" height="16" viewBox="0 0 16 16"><rect x="0.5" y="0.5" width="15" height="15" fill="#fff" stroke="#1a1a1a" stroke-width="1"/><path d="M14.8 0.5V14.8H0.5" stroke="#000" stroke-width="1.8" fill="none"/><path d="M2 14V2H14" stroke="#c8c8c8" stroke-width="0.8" fill="none"/><path d="M4.8 5.5L10.2 9.6M10.2 5.5L4.8 9.6" stroke="#b8161c" stroke-width="1.5"/></svg>
<div class="t" style="left:393px;top:426px;font-size:11px;color:#555;font-weight:400;">1</div>
<div class="t" style="left:477.6px;top:426px;font-size:11px;color:#555;font-weight:400;">test234</div>
<div class="t" style="left:577.5px;top:426px;font-size:11px;color:#555;font-weight:400;">test234</div>
<svg class="a" style="left:676px;top:425px" width="13" height="13" viewBox="0 0 13 13"><circle cx="6.5" cy="6.5" r="5.8" fill="#7cb84a" stroke="#5a9a35" stroke-width="0.8"/><circle cx="6.5" cy="5" r="4" fill="#a6d27a" opacity="0.6"/><path d="M3.5 6.8L5.7 9L9.8 4.2" stroke="#fff" stroke-width="1.7" fill="none"/></svg>
<div class="t" style="left:693.5px;top:426px;font-size:11px;color:#555;font-weight:400;">Passed</div>
<svg class="a" style="left:215px;top:450px" width="7" height="8" viewBox="0 0 7 8"><path d="M5.5 0.5L1.5 4L5.5 7.5" stroke="#c4c4c4" stroke-width="1.8" fill="none"/></svg>
<div class="a" style="left:227px;top:449px;width:647px;height:9px;background:#c8c8c8"></div>
<div class="a" style="left:200px;top:438px;width:6px;height:29px;background:#fff;border:1px solid #c4c4c4;border-right:none;border-radius:4px 0 0 4px"></div>
<svg class="a" style="left:203px;top:449px" width="4" height="7" viewBox="0 0 4 7"><path d="M4 0L0 3.5L4 7z" fill="#ababab"/></svg>
<div class="a" style="left:213px;top:464px;width:661px;height:1px;background:#c9c9c9"></div>
<div class="a" style="left:213px;top:497px;width:661px;height:1px;background:#cfcfcf"></div>
<div class="t" style="left:224.4px;top:473px;font-size:11px;color:#555;font-weight:400;">Comments</div>
<div class="t" style="left:298.5px;top:473px;font-size:11px;color:#555;font-weight:400;">Report</div>
<div class="t" style="left:367px;top:473px;font-size:11px;color:#222;font-weight:400;">Attachments</div>
<div class="t" style="left:448.3px;top:473px;font-size:11px;color:#555;font-weight:400;">History</div>
<div class="t" style="left:502px;top:473px;font-size:11px;color:#555;font-weight:400;"><span style="letter-spacing:0.25px">Test Description</span></div>
<div class="a" style="left:352px;top:476px;width:4px;height:4px;background:#1e6fc8"></div>
<div class="a" style="left:340px;top:494px;width:99px;height:3px;background:#111"></div>
<div class="t" style="left:222px;top:512px;font-size:11px;color:#555;font-weight:400;">Attach:</div>
<svg class="a" style="left:272px;top:509px" width="11" height="16" viewBox="0 0 11 16"><path d="M4.5 5V12.5Q4.5 13.8 5.6 13.8Q6.8 13.8 6.8 12.5V2.8Q6.8 1 5 1Q2.5 1 2.5 3V13Q2.5 15 5.5 15Q8.8 15 8.8 13V5" stroke="#3a3a3a" stroke-width="1.1" fill="none"/></svg>
<svg class="a" style="left:298px;top:509px" width="17" height="16" viewBox="0 0 17 16">
  <rect x="1.2" y="1.5" width="14.5" height="5.6" rx="2.8" fill="none" stroke="#3a3a3a" stroke-width="1.6"/>
  <path d="M4.5 4.3H12.5" stroke="#888" stroke-width="0.8"/>
  <circle cx="11.7" cy="11.5" r="4" fill="#5aa0d0" stroke="#3a78a8" stroke-width="0.7"/>
  <circle cx="11" cy="10.6" r="1.8" fill="#a8d4f0" opacity="0.8"/>
</svg>
<svg class="a" style="left:329px;top:511px" width="16" height="13" viewBox="0 0 16 13">
  <path d="M1 3.2H4.5L5.8 1.3H10.2L11.5 3.2H15V11.8H1z" fill="#4a4a4a" stroke="#2a2a2a" stroke-width="1"/>
  <circle cx="8" cy="7.3" r="3.4" fill="#e8e8e8"/>
  <circle cx="8" cy="7.3" r="2" fill="#2a2a2a"/>
  <circle cx="7.4" cy="6.7" r="0.6" fill="#ddd"/>
</svg>
<svg class="a" style="left:360px;top:511px" width="14" height="14" viewBox="0 0 14 14"><circle cx="6.9" cy="6.6" r="5.6" fill="#f0f0f0" stroke="#3a3a3a" stroke-width="1.1"/><path d="M6.9 5.3V9.8" stroke="#111" stroke-width="1.9"/><path d="M5.8 5.3H7.5M5.5 9.9H8.4" stroke="#111" stroke-width="0.9"/><circle cx="6.9" cy="3.5" r="1" fill="#111"/></svg>
<svg class="a" style="left:390px;top:508px" width="14" height="18" viewBox="0 0 14 18">
  <rect x="1.4" y="2.8" width="11" height="14" rx="1.2" fill="#e6eef4" stroke="#2f4f6a" stroke-width="1.4"/>
  <rect x="4.2" y="1.2" width="5.4" height="3.2" rx="1.2" fill="#d8d8d8" stroke="#5a5a5a" stroke-width="0.8"/>
  <path d="M3.8 7.5H10M3.8 10H10M3.8 12.5H8.5" stroke="#9aa8b4" stroke-width="0.9"/>
</svg>
<div class="a" style="left:410px;top:506px;width:1px;height:21px;background:#c8c8c8"></div>
<svg class="a" style="left:424px;top:508px" width="18" height="18" viewBox="0 0 18 18">
  <path d="M1.5 4.5H6L7.2 6H16.5V15.8H1.5z" fill="#d8d8d8" stroke="#6a6a6a" stroke-width="1"/>
  <path d="M2 10.2H7L8 9H16.3V15.5H2z" fill="#e0bc40"/>
  <path d="M1.5 15.8H16.5" stroke="#7a6a30" stroke-width="1"/>
  <path d="M1.7 10.5H7L8 9.3H16.3" stroke="#a89040" stroke-width="0.8" fill="none"/>
  <path d="M11.5 1V7.2M9 5L11.5 7.8L14 5" stroke="#1f3550" stroke-width="1.5" fill="none"/>
</svg>
<div class="t" style="left:447.4px;top:512px;font-size:11px;color:#555;font-weight:400;letter-spacing:0.3px">Open</div>
<svg class="a" style="left:490px;top:508px" width="15" height="17" viewBox="0 0 15 17"><path d="M7.5 1.8L13.8 7.8H10.3V13H4.7V7.8H1.2z" fill="#c4c4c4" stroke="#b0b0b0" stroke-width="0.8"/><path d="M5.3 8.5V12.5" stroke="#dedede" stroke-width="1.2"/><path d="M1.2 15.2H13.8" stroke="#9a9a9a" stroke-width="1.3"/></svg>
<div class="t" style="left:511.3px;top:512px;font-size:11px;color:#bdbdbd;font-weight:400;letter-spacing:0.3px">Upload</div>
<svg class="a" style="left:563px;top:509px" width="16" height="16" viewBox="0 0 16 16">
  <path d="M1 1.2H13L15 3.2V15H1z" fill="#7ea8cc" stroke="#22425e" stroke-width="1.3"/>
  <rect x="4" y="1.5" width="7" height="3.5" fill="#cfdde8" stroke="#22425e" stroke-width="0.7"/>
  <rect x="8.3" y="2" width="1.6" height="2.5" fill="#22425e"/>
  <rect x="3.2" y="7.5" width="9.6" height="6.8" fill="#fafafa"/>
  <path d="M4.3 9.3H11.7M4.3 11H11.7M4.3 12.7H11.7" stroke="#9aa" stroke-width="0.7"/>
</svg>
<div class="t" style="left:585.4px;top:512px;font-size:11px;color:#555;font-weight:400;letter-spacing:0.2px">Save As...</div>
<div class="a" style="left:642px;top:506px;width:1px;height:21px;background:#c8c8c8"></div>
<svg class="a" style="left:658px;top:510px" width="13" height="13" viewBox="0 0 13 13"><path d="M2.2 2.2L10.8 10.8M10.8 2.2L2.2 10.8" stroke="#a8382a" stroke-width="3.4" stroke-linecap="round"/><path d="M2.2 2.2L10.8 10.8M10.8 2.2L2.2 10.8" stroke="#f2664c" stroke-width="2" stroke-linecap="round"/></svg>
<div class="t" style="left:679.5px;top:512px;font-size:11px;color:#555;font-weight:400;letter-spacing:0.1px">Delete</div>
<div class="a" style="left:718px;top:506px;width:1px;height:21px;background:#c8c8c8"></div>
<svg class="a" style="left:733px;top:509px" width="16" height="16" viewBox="0 0 16 16">
  <g transform="scale(0.94)">
  <g fill="none">
  <path d="M2.3 8.2A6.2 6.2 0 0 1 12.8 4" stroke="#2f7a22" stroke-width="3.4"/>
  <path d="M14.7 8.8A6.2 6.2 0 0 1 4.2 13" stroke="#2f7a22" stroke-width="3.4"/>
  <path d="M2.3 8.2A6.2 6.2 0 0 1 12.8 4" stroke="#62b845" stroke-width="2"/>
  <path d="M14.7 8.8A6.2 6.2 0 0 1 4.2 13" stroke="#62b845" stroke-width="2"/>
  </g>
  <path d="M10 3.2L16 1.2L15.2 7.4z" fill="#62b845" stroke="#2f7a22" stroke-width="0.8"/>
  <path d="M7 13.8L1 15.8L1.8 9.6z" fill="#62b845" stroke="#2f7a22" stroke-width="0.8"/>
  </g>
</svg>
<div class="a" style="left:213px;top:536px;width:661px;height:20px;background:#717171"></div>
<div class="a" style="left:432px;top:536px;width:1px;height:20px;background:#5c5c5c"></div>
<div class="a" style="left:552px;top:536px;width:1px;height:20px;background:#5c5c5c"></div>
<div class="a" style="left:722px;top:536px;width:1px;height:20px;background:#5c5c5c"></div>
<div class="t" style="left:218.7px;top:540px;font-size:11px;color:#fff;font-weight:700;">Name</div>
<div class="t" style="left:438.7px;top:540px;font-size:11px;color:#fff;font-weight:700;">Size</div>
<div class="t" style="left:558px;top:540px;font-size:11px;color:#fff;font-weight:700;">Modified</div>
<div class="a" style="left:245px;top:557px;width:169px;height:33px;background:#0a78d7"></div>
<div class="a" style="left:212px;top:557px;width:213px;height:37px;border:1px solid #ad3a42"></div>
<svg class="a" style="left:218px;top:559px" width="23" height="28" viewBox="0 0 23 28">
  <rect x="0" y="0" width="23" height="28" fill="#f6df8e"/>
  <path d="M2.5 0V28M6 0V28M18.5 0V28" stroke="#fbeeb8" stroke-width="1.2"/>
  <path d="M0.5 0.5H22.5V27.5H0.5z" fill="none" stroke="#e8cf78" stroke-width="1"/>
  <path d="M18.3 28V18.5Q18.3 16 20.2 16Q22.5 16 22.5 18.5V28z" fill="#f0c85a" stroke="#d8b050" stroke-width="0.6"/>
  <rect x="10.2" y="11" width="4.6" height="16.5" fill="#e8d890" stroke="#8a7a40" stroke-width="0.6"/>
  <path d="M11.4 11.5V27.5" stroke="#3a3520" stroke-width="1.1" stroke-dasharray="1 1"/>
  <path d="M13.6 12.5V27.5" stroke="#3a3520" stroke-width="1.1" stroke-dasharray="1 1"/>
  <rect x="9.6" y="0.5" width="5.6" height="11.5" rx="2.8" fill="#e8e8e0" stroke="#8a8a80" stroke-width="0.8"/>
  <rect x="11.4" y="3.5" width="2" height="0.9" fill="#333"/>
  <circle cx="12.4" cy="10" r="0.9" fill="#222"/>
</svg>
<div class="t" style="left:249px;top:568px;font-size:11px;color:#fff;font-weight:400;">tes12345-20210521221652.zip</div>
<div class="t" style="left:437.5px;top:568px;font-size:11px;color:#222;font-weight:400;">2,049 KB</div>
<div class="t" style="left:556px;top:568px;font-size:11px;color:#222;font-weight:400;">5/21/2021 10:16:54 PM</div>
</body></html>
